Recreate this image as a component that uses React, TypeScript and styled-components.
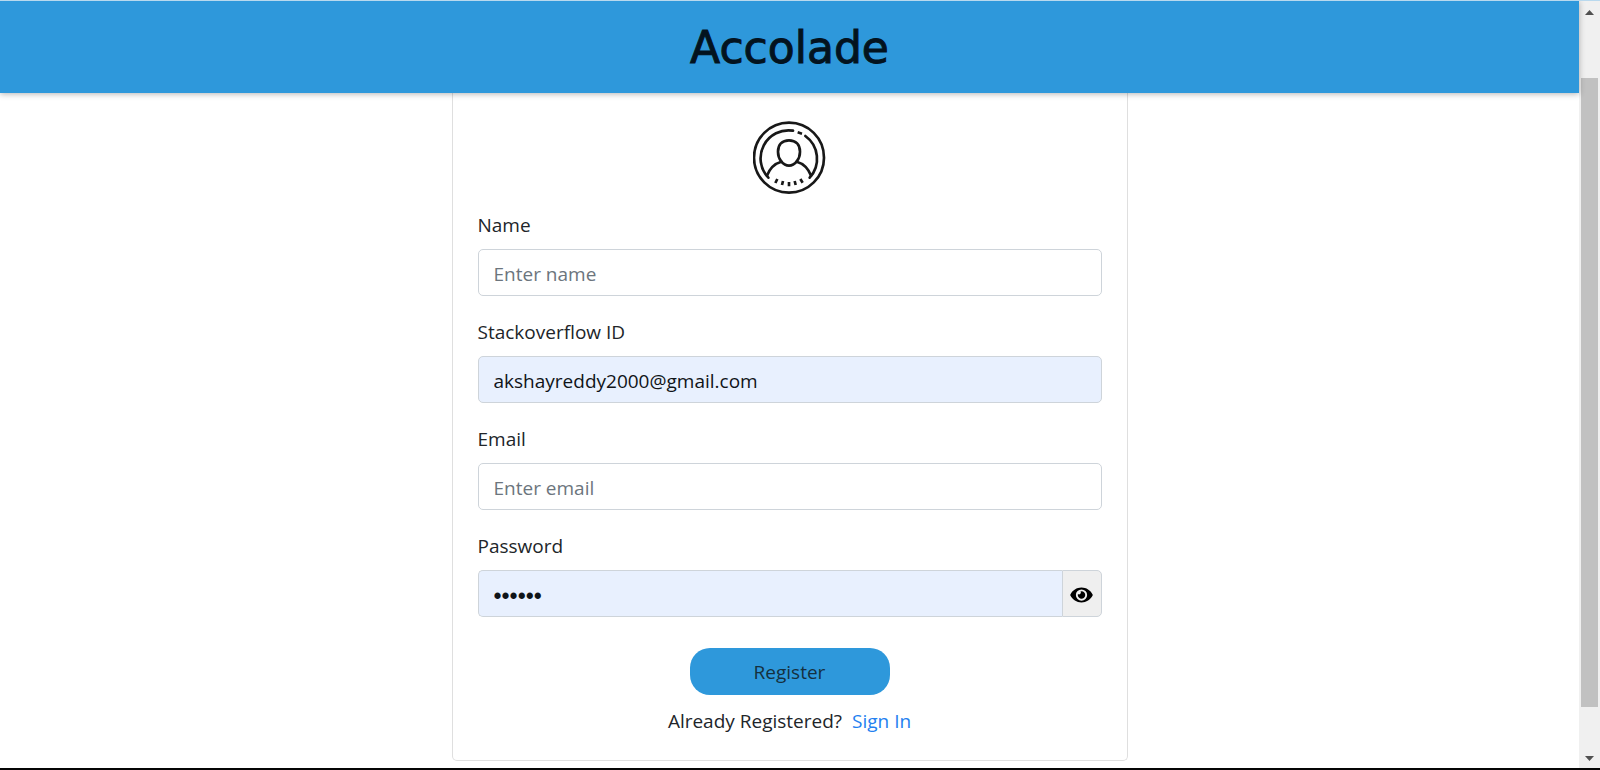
import React, { useState } from 'react';
import styled, { createGlobalStyle } from 'styled-components';
import { FaEye } from 'react-icons/fa';

const GlobalStyle = createGlobalStyle`
  *, *::before, *::after { box-sizing: border-box; }
  body {
    margin: 0;
    background: #fff;
    color: #212529;
    font-family: "Open Sans", "Noto Sans", sans-serif;
    font-size: 19px;
    line-height: 30px;
  }
  input, button { font: inherit; }
`;

const Window = styled.div`
  display: flex;
  height: 100vh;
  border-top: 1px solid #b9d9ee;
  border-bottom: 2px solid #050505;
  overflow: hidden;
`;

const Page = styled.div`
  flex: 1;
  min-width: 0;
  display: flex;
  flex-direction: column;
`;

const Header = styled.header`
  flex: none;
  z-index: 1;
  display: flex;
  justify-content: center;
  padding: 23px 20px 22px;
  background: #2e98db;
  box-shadow: 0 1px 6px rgba(0, 0, 0, 0.3);
`;

const Brand = styled.h1`
  margin: 0;
  color: #03131f;
  font-family: "DejaVu Sans", sans-serif;
  font-size: 44px;
  font-weight: 400;
  line-height: 47px;
  -webkit-text-stroke: 1px #03131f;
`;

const Card = styled.main`
  width: 100%;
  max-width: 676px;
  margin: 0 auto;
  padding: 28px 25px 24px;
  border: 1px solid #dfdfdf;
  border-top: 0;
  border-radius: 0 0 5px 5px;
`;

const Avatar = styled.svg`
  display: block;
  width: 74px;
  height: 74px;
  margin: 0 auto 15px;
  fill: none;
  stroke: #181818;
  stroke-width: 8;
  stroke-linecap: round;
`;

const Field = styled.div`
  margin-bottom: 21px;
`;

const Label = styled.label`
  display: block;
  margin-bottom: 9px;
`;

const Input = styled.input<{ $filled?: boolean }>`
  display: block;
  width: 100%;
  min-width: 0;
  height: 47px;
  padding: 2px 15px 0;
  border: 1px solid #ced4da;
  border-radius: 5px;
  outline: 0;
  background: ${(p) => (p.$filled ? '#e8f0fe' : '#fff')};
  color: #101418;
  &::placeholder { color: #6c757d; opacity: 1; }
  &[type='password'] {
    padding-top: 6px;
    font-family: "Liberation Sans", sans-serif;
    font-size: 23px;
  }
`;

const PasswordGroup = styled.div`
  display: flex;
  ${Input} {
    flex: 1;
    border-right: 0;
    border-radius: 5px 0 0 5px;
  }
`;

const RevealButton = styled.button`
  display: flex;
  align-items: center;
  justify-content: center;
  width: 40px;
  padding: 2px 0 0;
  border: 1px solid #ced4da;
  border-radius: 0 5px 5px 0;
  background: #efefef;
  color: #000;
  svg { width: 23px; height: 20px; }
`;

const Submit = styled.button`
  display: block;
  width: 200px;
  height: 47px;
  margin: 31px auto 11px;
  padding: 1px 0 0;
  border: 0;
  border-radius: 20px;
  background: #2e98db;
  color: #15303f;
`;

const Footnote = styled.p`
  display: flex;
  justify-content: center;
  gap: 10px;
  margin: 0;
`;

const Link = styled.a`
  color: #2380f0;
  text-decoration: none;
`;

const ScrollTrack = styled.div`
  flex: none;
  display: flex;
  flex-direction: column;
  align-items: center;
  width: 21px;
  background: #f0f0f0;
`;

const Arrow = styled.svg`
  flex: none;
  width: 21px;
  height: 21px;
  fill: #505050;
`;

const Thumb = styled.div`
  flex: 1;
  width: 17px;
  margin: 56px 0 40px;
  background: #c1c1c1;
`;

export default function App() {
  const [shown, setShown] = useState(false);
  return (
    <>
      <GlobalStyle />
      <Window>
        <Page>
          <Header>
            <Brand>Accolade</Brand>
          </Header>
          <Card>
            <Avatar viewBox="39 32 222 222" aria-hidden="true">
              <circle cx="147" cy="142" r="105" />
              <path d="M85 202A84 84 0 0 1 159 61" />
              <path d="M173 66L186 70" strokeLinecap="butt" />
              <path d="M196 77A84 84 0 0 1 209 202" />
              <path d="M147 90C126 90 114 104 114 124C114 146 129 166 147 166C165 166 180 146 180 124C180 104 168 90 147 90Z" />
              <path d="M81 196C89 174 103 160 124 154M170 154C191 160 205 174 213 196" />
              <path strokeLinecap="butt" d="M112 206L106 218M129 212L126 224M147 215V228M164 212L167 224M181 206L188 217" />
            </Avatar>
            <form onSubmit={(e) => e.preventDefault()}>
              <Field>
                <Label htmlFor="name">Name</Label>
                <Input id="name" type="text" placeholder="Enter name" />
              </Field>
              <Field>
                <Label htmlFor="stack-id">Stackoverflow ID</Label>
                <Input id="stack-id" type="text" defaultValue="akshayreddy2000@gmail.com" $filled />
              </Field>
              <Field>
                <Label htmlFor="email">Email</Label>
                <Input id="email" type="email" placeholder="Enter email" />
              </Field>
              <Field>
                <Label htmlFor="password">Password</Label>
                <PasswordGroup>
                  <Input id="password" type={shown ? 'text' : 'password'} defaultValue="secret" $filled />
                  <RevealButton type="button" aria-label="Show password" onClick={() => setShown(!shown)}>
                    <FaEye />
                  </RevealButton>
                </PasswordGroup>
              </Field>
              <Submit type="submit">Register</Submit>
            </form>
            <Footnote>
              <span>Already Registered?</span>
              <Link href="#signin">Sign In</Link>
            </Footnote>
          </Card>
        </Page>
        <ScrollTrack aria-hidden="true">
          <Arrow viewBox="0 0 21 21"><path d="M6 14L10.500 9L15 14Z" /></Arrow>
          <Thumb />
          <Arrow viewBox="0 0 21 21"><path d="M6 9L10.500 14L15 9Z" /></Arrow>
        </ScrollTrack>
      </Window>
    </>
  );
}
